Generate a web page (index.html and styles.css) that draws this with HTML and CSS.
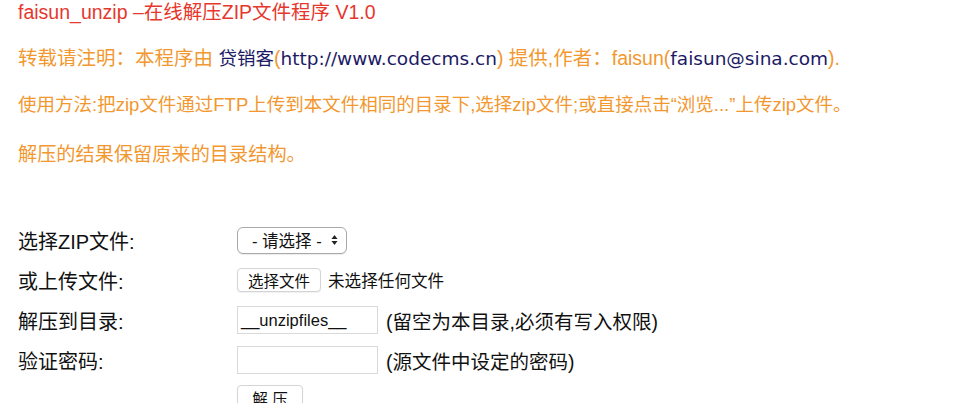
FILE: index.html
```html
<!DOCTYPE html>
<html>
<head>
<meta charset="utf-8">
<link rel="stylesheet" href="styles.css">
</head>
<body>
<div class="page">
  <p class="title">faisun_unzip –在线解压ZIP文件程序 V1.0</p>
  <p class="note credit">转载请注明：本程序由 <span class="link">贷销客</span>(<span class="link">http://www.codecms.cn</span>) 提供,作者：faisun(<span class="link">faisun@sina.com</span>).</p>
  <p class="note">使用方法:把zip文件通过FTP上传到本文件相同的目录下,选择zip文件;或直接点击“浏览...”上传zip文件。</p>
  <p class="note last">解压的结果保留原来的目录结构。</p>
  <form class="form">
    <div class="row">
      <label class="label">选择ZIP文件:</label>
      <div class="field"><span class="select">- 请选择 - <svg class="arrows" width="7" height="12" viewBox="0 0 7 12"><path d="M3.5 1 L6.5 5 H0.5 Z M3.5 11 L6.5 7 H0.5 Z" fill="#222"/></svg></span></div>
    </div>
    <div class="row">
      <label class="label">或上传文件:</label>
      <div class="field"><span class="btn">选择文件</span><span class="filetext">未选择任何文件</span></div>
    </div>
    <div class="row">
      <label class="label">解压到目录:</label>
      <div class="field"><span class="input">__unzipfiles__</span><span class="hint">(留空为本目录,必须有写入权限)</span></div>
    </div>
    <div class="row">
      <label class="label">验证密码:</label>
      <div class="field"><span class="input"></span><span class="hint">(源文件中设定的密码)</span></div>
    </div>
    <div class="row actions">
      <label class="label"></label>
      <div class="field"><span class="btn submit">解 压</span></div>
    </div>
  </form>
</div>
</body>
</html>
```
FILE: styles.css
```css
html, body { margin: 0; padding: 0; background: #fff; }
body {
  font-family: "Liberation Sans", "Noto Sans CJK SC", sans-serif;
  font-size: 18.5px;
  color: #111;
}
.page { padding: 0 0 0 18px; }
p { margin: 0; }
.title { color: #e6372d; line-height: 24px; font-size: 19.5px; }
.note { color: #f29830; line-height: 24px; margin-top: 22px; }
.note.credit { font-size: 19.5px; }
.note.last { margin-top: 26px; font-size: 19.2px; }
.link { color: #1c1a66; font-family: "DejaVu Sans", "Noto Sans CJK SC", sans-serif; font-size: 18.5px; }
.form { margin-top: 53px; }
.row { display: flex; align-items: center; height: 40px; }
.row.actions { align-items: flex-start; padding-top: 5px; box-sizing: border-box; }
.label { width: 219px; flex: none; font-size: 20px; }
.field { display: flex; align-items: center; font-size: 16.5px; }
.select {
  display: inline-flex; align-items: center; justify-content: space-between;
  width: 110px; height: 27px; padding: 0 8px 0 14px;
  box-sizing: border-box;
  border: 1px solid #a9a9a9; border-radius: 6px; background: #fff;
  font-size: 16.5px; box-shadow: 0 1px 1px rgba(0,0,0,0.08);
}
.btn {
  display: inline-flex; align-items: center; justify-content: center;
  height: 24px; padding: 0 10px;
  box-sizing: border-box;
  border: 1px solid #d4d4d4; border-radius: 4px; background: #fff;
  font-size: 15.5px; box-shadow: 0 1px 1px rgba(0,0,0,0.06);
}
.filetext { margin-left: 7px; font-size: 16.6px; }
.input {
  display: inline-flex; align-items: center;
  width: 141px; height: 28px; padding: 0 3px;
  box-sizing: border-box;
  border: 1px solid #d9d9d9; font-size: 16.5px;
}
.hint { margin-left: 8px; font-size: 19.5px; }
.submit { width: 66px; height: 26px; }
```
